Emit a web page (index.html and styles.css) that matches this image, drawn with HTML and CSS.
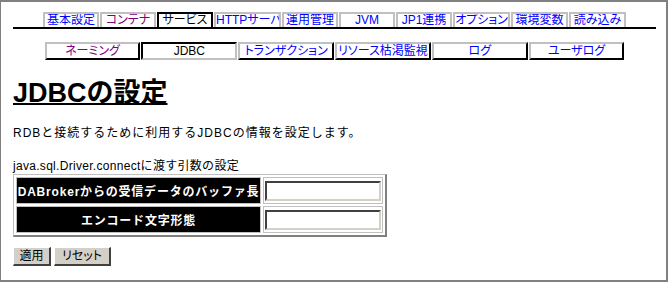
FILE: index.html
```html
<!DOCTYPE html>
<html lang="ja">
<head>
  <meta charset="UTF-8">
  <title>JDBCの設定</title>
<link rel="stylesheet" href="styles.css">
</head>
<body>

  <div class="frame">
    <div class="tabs main-tabs">
      <a class="tab" href="#">基本設定</a>
      <a class="tab visited" href="#">コンテナ</a>
      <span class="tab current">サービス</span>
      <a class="tab" href="#">HTTPサーバ</a>
      <a class="tab" href="#">運用管理</a>
      <a class="tab" href="#">JVM</a>
      <a class="tab" href="#">JP1連携</a>
      <a class="tab" href="#">オプション</a>
      <a class="tab" href="#">環境変数</a>
      <a class="tab" href="#">読み込み</a>
    </div>

    <div class="tabs sub-tabs">
      <a class="tab visited" href="#">ネーミング</a>
      <span class="tab current">JDBC</span>
      <a class="tab" href="#">トランザクション</a>
      <a class="tab" href="#">リソース枯渇監視</a>
      <a class="tab" href="#">ログ</a>
      <a class="tab" href="#">ユーザログ</a>
    </div>

    <h1>JDBCの設定</h1>
    <p class="lead">RDBと接続するために利用するJDBCの情報を設定します。</p>

    <p class="caption">java.sql.Driver.connectに渡す引数の設定</p>
    <table class="params">
      <tr>
        <th>DABrokerからの受信データのバッファ長</th>
        <td><input type="text" autocomplete="off"></td>
      </tr>
      <tr>
        <th>エンコード文字形態</th>
        <td><input type="text" autocomplete="off"></td>
      </tr>
    </table>

    <div class="actions">
      <button class="apply">適用</button>
      <button class="reset">リセット</button>
    </div>
  </div>

</body>
</html>
```

FILE: styles.css
```css
html, body {
  margin: 0;
  padding: 0;
  background: #fff;
}

body {
  font-family: "Liberation Sans", "Noto Sans CJK JP", sans-serif;
  font-size: 12px;
  color: #000;
}

.frame {
  box-sizing: border-box;
  height: 282px;
  border-style: solid;
  border-color: #808080;
  border-width: 2px 2px 2px 1px;
  padding: 10px 0 0 12px;
}

/* tab rows */
.tabs {
  display: grid;
  justify-content: center;
  width: 643px;
}

.tab {
  display: block;
  text-align: center;
  text-decoration: none;
  color: #0000ff;
  white-space: nowrap;
  overflow: hidden;
  font-feature-settings: "palt";
}

.tab.visited {
  color: #800080;
}

.tab.current {
  color: #000;
  background: #fff;
}

.main-tabs {
  grid-template-columns: 56px 56px 56px 67px 56px 56px 56px 57px 57px 57px;
  column-gap: 1px;
  border-bottom: 2px solid #000;
}

.main-tabs .tab {
  height: 13px;
  line-height: 13px;
  border: 2px solid #c0c0c0;
  border-bottom: none;
}

.main-tabs .tab.current {
  border-color: #000;
}

.sub-tabs {
  grid-template-columns: repeat(6, 95.8px);
  column-gap: 1px;
  margin-top: 13px;
}

.sub-tabs .tab {
  height: 14px;
  line-height: 14px;
  border-style: solid;
  border-width: 2px;
  border-color: #c0c0c0 #000 #000 #c0c0c0;
}

.sub-tabs .tab.current {
  border-color: #000 #c0c0c0 #c0c0c0 #000;
}

/* page body */
h1 {
  margin: 18px 0 0;
  font-size: 27px;
  line-height: 30px;
  font-weight: bold;
  text-decoration: underline;
  text-decoration-thickness: 2px;
}

.lead {
  margin: 18px 0 0;
  line-height: 14px;
  letter-spacing: 1px;
}

.caption {
  margin: 19px 0 0;
  line-height: 14px;
  letter-spacing: 0.3px;
}

.params {
  margin-top: 1px;
  border-collapse: separate;
  border-spacing: 2px;
  border-style: solid;
  border-width: 1px 2px 2px 1px;
  border-color: #c0c0c0 #808080 #808080 #c0c0c0;
}

.params th,
.params td {
  border: 1px solid #c0c0c0;
  padding: 0;
  height: 23px;
}

.params th {
  width: 243px;
  background: #000;
  color: #fff;
  font-weight: bold;
  text-align: center;
  white-space: nowrap;
  letter-spacing: 0.8px;
}

.params td {
  padding: 1px;
}

.params input {
  box-sizing: border-box;
  display: block;
  width: 116px;
  height: 20px;
  margin: 0;
  padding: 0 2px;
  border-style: solid;
  border-width: 2px;
  border-color: #404040 #d4d0c8 #d4d0c8 #404040;
  font-size: 12px;
}

.actions {
  display: flex;
  gap: 3px;
  margin-top: 10px;
}

.actions button {
  box-sizing: border-box;
  height: 19px;
  padding: 0;
  font-family: inherit;
  font-size: 12px;
  line-height: 13px;
  font-feature-settings: "palt";
  background: #d4d0c8;
  border-style: solid;
  border-width: 1px 2px 2px 1px;
  border-color: #fff #404040 #404040 #fff;
  color: #000;
}

.actions .apply {
  width: 38px;
}

.actions .reset {
  width: 57px;
}
```
